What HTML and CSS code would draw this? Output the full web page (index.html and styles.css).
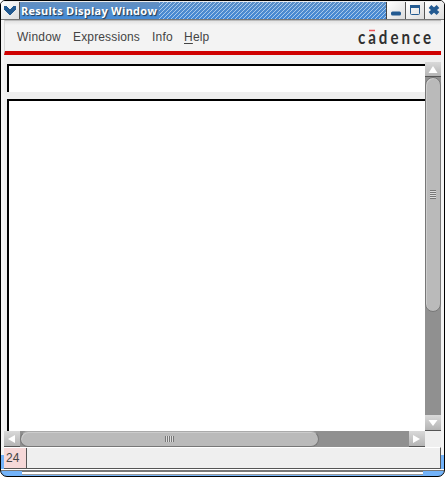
FILE: index.html
```html
<!DOCTYPE html>
<html lang="en">
<head>
<meta charset="utf-8">
<title>Results Display Window</title>
<link rel="stylesheet" href="styles.css">
</head>
<body>
<div class="window">
  <header class="titlebar">
    <div class="tbtn menu"><svg width="18" height="18" viewBox="0 0 18 18" shape-rendering="crispEdges"><path d="M3 4h3v1h1v1h1v1h2V6h1V5h1V4h3v4h-1v1h-1v1h-1v1h-1v1h-1v1H8v-1H7v-1H6v-1H5V9H4V8H3z" fill="#235a91"/></svg></div>
    <h1><span>Results Display Window</span></h1>
    <div class="tbtn"><svg width="18" height="18"><rect x="4" y="9.500" width="10" height="4" rx="1.5" fill="#235a91"/></svg></div>
    <div class="tbtn"><svg width="18" height="18"><rect x="4.500" y="3.500" width="9" height="9" rx="1" fill="none" stroke="#235a91"/><path d="M4 3h10v3H4z" fill="#235a91"/></svg></div>
    <div class="tbtn"><svg width="18" height="18"><path d="M5 4.500l8 7M13 4.500l-8 7" stroke="#235a91" stroke-width="4"/></svg></div>
  </header>
  <div class="body">
    <nav class="menubar">
      <span class="m1">Window</span><span class="m2">Expressions</span><span class="m3">Info</span><span class="m4"><u>H</u>elp</span>
      <svg class="logo" width="74" height="24"><text transform="scale(.84 1)" x="0" y="18" textLength="87" lengthAdjust="spacing">cadence</text><path d="M11 4.500h6" stroke="#ed5159" stroke-width="1.5"/></svg>
    </nav>
    <main class="content">
      <section class="fields"><div class="entry"></div><div class="results"></div></section>
      <div class="vscroll"><div class="arrow"><svg width="16" height="16"><path d="M8 4l4.5 7h-9z" fill="#fff"/></svg></div><div class="vthumb"><i></i></div><div class="arrow end"><svg width="16" height="16"><path d="M3.500 5h9L8 11z" fill="#fff"/></svg></div></div>
      <div class="hscroll"><div class="arrow"><svg width="16" height="16"><path d="M4 8l7-4v8z" fill="#fff"/></svg></div><div class="hthumb"><i></i></div><div class="arrow end"><svg width="16" height="16"><path d="M11 8L4 4v8z" fill="#fff"/></svg></div></div>
    </main>
    <footer class="status"><span>24</span></footer>
  </div>
  <div class="bottom"><i></i><b></b><i></i></div>
</div>
</body>
</html>
```
FILE: styles.css
```css
* { box-sizing: border-box; }
body { margin: 0; background: #fff; font: 12px "Liberation Sans", sans-serif; overflow: hidden; }
.window { width: 445px; height: 477px; border: 1px solid #000; border-radius: 5px 5px 7px 7px; overflow: hidden; background: linear-gradient(#f4f4f4 0 454px, #73b3f9 454px); }
.titlebar { display: flex; height: 19px; border-top: 1px solid #eee; border-bottom: 1px solid #777; }
.tbtn { width: 19px; height: 17px; border-right: 1px solid #555; background: linear-gradient(135deg, #fff, #ddd); flex: none; }
.tbtn:last-child { border: 0; }
.tbtn svg { display: block; }
h1 { flex: 1; margin: 0; height: 17px; border-right: 1px solid #444; font: bold 11px/17px "Open Sans", sans-serif; color: #fff; background: linear-gradient(135deg, transparent 43%, #a9caec 43% 57%, transparent 57%) 0 0 / 4px 4px, linear-gradient(#5a8fc8, #4287d5); }
h1 span { display: block; width: 139px; padding-left: 1px; background: linear-gradient(#648fc0, #448cd8); text-shadow: 1px 1px 1px #203850; letter-spacing: .26px; white-space: nowrap; }
.body { margin: 0 3px; height: 449px; background: #efefef; }
.menubar { display: flex; height: 35px; padding: 8px 8px 0 12px; line-height: 16px; border-top: 1px solid #bbb; border-left: 1px solid #d8d8d8; border-bottom: 4px solid #cf0000; background: linear-gradient(#e1e1e1, #f3f3f3 4px); color: #444; letter-spacing: .2px; }
.m1 { width: 56px; } .m2 { width: 79px; letter-spacing: .15px; } .m3 { width: 32px; } .m4 { flex: 1; }
.menubar u { text-underline-offset: 2px; }
.logo { margin: -3px 1px 0 0; overflow: visible; letter-spacing: 0; }
.logo text { font: bold 18px "Lato", sans-serif; fill: #303030; }
.content { display: grid; grid-template: 376px 16px / 421px 16px; }
.fields { padding: 9px 0 0 3px; display: flex; flex-direction: column; }
.entry, .results { border: solid #000; border-width: 2px 0 0 2px; background: #fff; }
.entry { height: 28px; margin-bottom: 7px; }
.results { flex: 1; }
.vscroll { display: flex; flex-direction: column; margin-top: 7px; background: #909090; }
.hscroll { display: flex; background: #909090; }
.arrow { width: 16px; height: 15px; background: linear-gradient(#d9d9d9, #b4b4b4); border-bottom: 1px solid #555; }
.hscroll .arrow { height: 16px; }
.arrow svg { display: block; }
.hscroll .end { margin-left: auto; }
.vscroll .end { margin-top: auto; height: 16px; }
.vthumb, .hthumb { display: flex; align-items: center; justify-content: center; border: 1px solid #777; border-radius: 8px; background: #bababa; box-shadow: inset 1px 1px #ccc; }
.vthumb { height: 235px; width: 16px; }
.hthumb { width: 299px; height: 16px; border-top-color: #aaa; }
.vthumb i { width: 6px; height: 9px; background: repeating-linear-gradient(#777 0 1px, #ddd 1px 2px); }
.hthumb i { width: 9px; height: 6px; background: repeating-linear-gradient(90deg, #777 0 1px, #ddd 1px 2px); }
.status { height: 22px; border: solid #555; border-width: 0 1px 1px 0; border-top: 1px solid #fff; }
.status span { display: block; width: 23px; height: 20px; padding-left: 2px; line-height: 20px; background: #f6d8d8; border-right: 1px solid #555; color: #444; }
.bottom { display: flex; height: 6px; padding: 0 3px; background: linear-gradient(#fff 0 1px, #777 1px 2px, transparent 2px); }
.bottom i { width: 18px; }
.bottom b { flex: 1; border-top: 1px solid #777; border-bottom: 1px solid #999; background: #fff; margin-top: 2px; }
```
